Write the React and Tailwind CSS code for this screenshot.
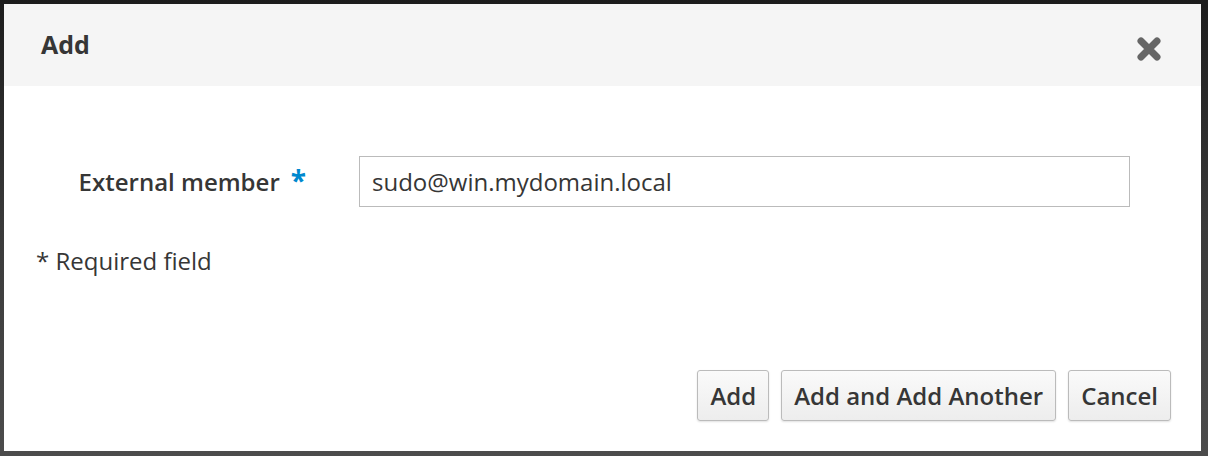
import { useState } from "react";

export default function App() {
  const [member, setMember] = useState("sudo@win.mydomain.local");

  const btn =
    "h-[51px] px-[12px] rounded-[3px] border border-[#bbbbbb] bg-gradient-to-b from-[#fafafa] to-[#ededed] text-[24px] font-semibold text-[#363636] shadow-[0_1px_2px_rgba(0,0,0,0.12)]";

  return (
    <div
      className="w-[1208px] h-[456px] bg-gradient-to-b from-[#1c1c1c] via-[#3a3a3a] to-[#4c4c4c] pt-[4px] pl-[4px] pr-[7px] pb-[5px]"
      style={{ fontFamily: '"Open Sans", "Noto Sans", sans-serif' }}
    >
      <div className="h-full bg-white flex flex-col">
        {/* Header */}
        <div className="h-[82px] bg-[#f5f5f5] flex items-center justify-between pl-[37px] pr-[39px]">
          <h1 className="text-[25px] font-bold text-[#363636]">Add</h1>
          <button className="w-[26px] h-[26px] mt-[8px] flex items-center justify-center">
            <svg viewBox="0 0 26 26" width="26" height="26">
              <path
                d="M5 5 L21 21 M21 5 L5 21"
                stroke="#666666"
                strokeWidth="7"
                strokeLinecap="round"
              />
            </svg>
          </button>
        </div>

        {/* Body */}
        <div className="flex-1 pt-[70px] pl-[32px] pr-[71px]">
          <div className="flex items-center">
            <label className="w-[323px] flex justify-end items-center pr-[53px] text-[24px] font-semibold text-[#363636]">
              External member
              <span className="ml-[11px] text-[28px] leading-none text-[#0088ce] font-bold -mt-[4px]">*</span>
            </label>
            <input
              value={member}
              onChange={(e) => setMember(e.target.value)}
              className="flex-1 h-[51px] border border-[#bbbbbb] px-[12px] text-[24px] text-[#363636] outline-none"
            />
          </div>
          <p className="mt-[36px] text-[24px] text-[#363636]">* Required field</p>
        </div>

        {/* Footer */}
        <div className="flex justify-end gap-[12px] pr-[30px] pb-[30px]">
          <button className={btn}>Add</button>
          <button className={btn}>Add and Add Another</button>
          <button className={btn}>Cancel</button>
        </div>
      </div>
    </div>
  );
}
